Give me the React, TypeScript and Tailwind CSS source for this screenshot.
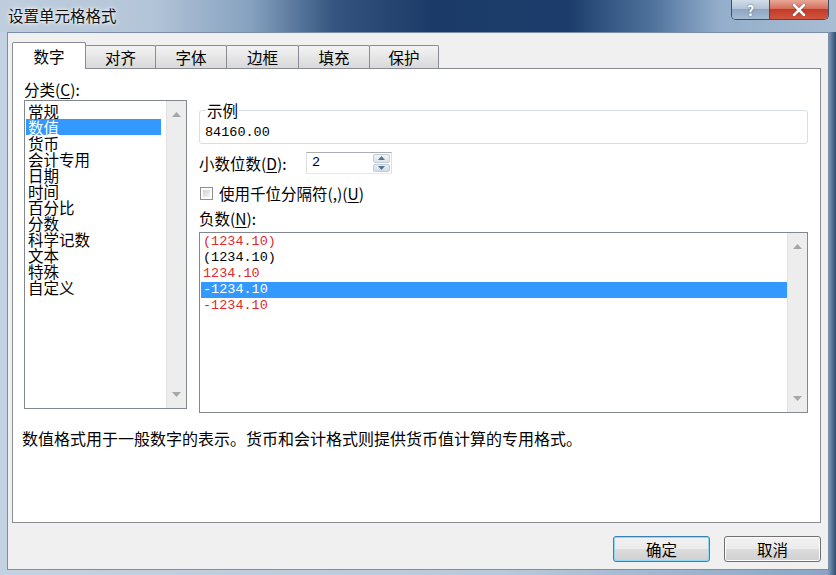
const categories = ['常规', '数值', '货币', '会计专用', '日期', '时间', '百分比', '分数', '科学记数', '文本', '特殊', '自定义'];

const negatives = [
  { text: '(1234.10)', red: true },
  { text: '(1234.10)', red: false },
  { text: '1234.10', red: true },
  { text: '-1234.10', red: false, selected: true },
  { text: '-1234.10', red: true },
];

const tabs = [
  { label: '数字', w: 'w-[74px]' },
  { label: '对齐', w: 'w-[71px]' },
  { label: '字体', w: 'w-[72px]' },
  { label: '边框', w: 'w-[73px]' },
  { label: '填充', w: 'w-[72px]' },
  { label: '保护', w: 'w-[70px]' },
];

function Arrow({ up }: { up?: boolean }) {
  return (
    <svg width="9" height="5" viewBox="0 0 9 5">
      <path d={up ? 'M0 5 L4.5 0 L9 5 Z' : 'M0 0 L4.5 5 L9 0 Z'} fill="#a6a6a6" />
    </svg>
  );
}

function ScrollBar() {
  return (
    <div className="w-[20px] h-full shrink-0 bg-[#ededed] border-l border-[#e2e2e2] flex flex-col justify-between items-center py-[11px]">
      <Arrow up />
      <Arrow />
    </div>
  );
}

function Key({ k }: { k: string }) {
  return (
    <>
      (<span className="underline underline-offset-2">{k}</span>)
    </>
  );
}

function WinButton({ children, focused }: { children: React.ReactNode; focused?: boolean }) {
  return (
    <button
      className={
        focused
          ? 'w-[97px] h-[26px] rounded-[3px] border border-[#3c7fb1] shadow-[inset_0_0_0_1px_#92d8f5] bg-[linear-gradient(#f2f2f2_0%,#ebebeb_50%,#dddddd_51%,#cfcfcf_100%)] text-[15.5px] leading-[16px]'
          : 'w-[97px] h-[26px] rounded-[3px] border border-[#707070] shadow-[inset_0_0_0_1px_#fbfbfb] bg-[linear-gradient(#f2f2f2_0%,#ebebeb_50%,#dddddd_51%,#cfcfcf_100%)] text-[15.5px] leading-[16px]'
      }
    >
      {children}
    </button>
  );
}

export default function App() {
  return (
    <div className="w-[836px] h-[575px] flex flex-col overflow-hidden bg-[linear-gradient(to_right,#c3d2e2_0%,#b7c9dc_60%,#8aa5c3_99%,#2e4a6e_100%)] font-['Noto_Sans_CJK_SC',sans-serif] text-black">

      {/* Title bar */}
      <div className="h-[32px] shrink-0 flex items-start justify-between bg-[linear-gradient(to_right,#bfcddd_0%,#b3c5d8_18%,#86a1bf_30%,#34557f_40%,#1b3a67_52%,#1c3d6b_68%,#4f729c_78%,#93aecb_86%,#a9bdd3_100%)]">
        <div className="pl-[8px] pt-[7px] text-[15.5px] leading-[16px] text-[#111] [text-shadow:0_0_6px_#ffffff,0_0_3px_#ffffff]">
          设置单元格格式
        </div>
        <div className="flex mr-[7px] h-[20px] rounded-b-[5px] border border-t-0 border-[#3b4f6b] overflow-hidden">
          <div className="w-[38px] h-full flex items-center justify-center bg-[linear-gradient(#d2dde9_0%,#b3c4d7_45%,#8ea6c2_50%,#a7bcd3_100%)] border-r border-[#3b4f6b] text-white font-bold text-[14px] leading-[14px] [text-shadow:0_0_2px_#41597a]">
            ?
          </div>
          <div className="w-[58px] h-full flex items-center justify-center bg-[linear-gradient(#e9a897_0%,#d7705c_45%,#c23b27_50%,#d1553f_100%)]">
            <svg width="14" height="12" viewBox="0 0 14 12">
              <path d="M2 1 L12 11 M12 1 L2 11" stroke="#3a2020" strokeWidth="4" strokeLinecap="round" opacity="0.35" />
              <path d="M2 1 L12 11 M12 1 L2 11" stroke="#ffffff" strokeWidth="2.6" strokeLinecap="round" />
            </svg>
          </div>
        </div>
      </div>

      {/* Client area */}
      <div className="flex-1 mx-[7px] mb-[5px] bg-[#f0f0f0] border border-[#7b8ea8] pt-[9px] pl-[4px] pr-[7px] flex flex-col">

        {/* Tabs */}
        <div className="flex items-end h-[26px] relative z-10">
          {tabs.map((t, i) =>
            i === 0 ? (
              <div
                key={t.label}
                className={`${t.w} h-[27px] -mb-px bg-white border border-b-0 border-[#898c95] rounded-t-[2px] flex items-center justify-center text-[15.5px] leading-[16px] relative z-10`}
              >
                {t.label}
              </div>
            ) : (
              <div
                key={t.label}
                className={`${t.w} h-[23px] -ml-px bg-linear-to-b from-[#f3f3f3] to-[#d9d9d9] border border-b-0 border-[#898c95] rounded-t-[2px] flex items-center justify-center text-[15.5px] leading-[16px]`}
              >
                {t.label}
              </div>
            )
          )}
        </div>

        {/* Tab panel */}
        <div className="w-[809px] h-[455px] bg-white border border-[#898c95] px-[11px] pt-[12px] text-[15.5px] leading-[16px]">
          <div className="flex">

            {/* Category */}
            <div className="w-[163px] shrink-0">
              <div className="h-[16px]">
                分类<Key k="C" />:
              </div>
              <div className="mt-[3px] h-[309px] border border-[#828790] flex">
                <div className="flex-1 pt-[2px]">
                  {categories.map((c, i) => (
                    <div
                      key={c}
                      className={
                        i === 1
                          ? 'h-[16px] ml-[1px] mr-[5px] pl-[2px] bg-[#3399ff] text-white'
                          : 'h-[16px] ml-[1px] mr-[5px] pl-[2px]'
                      }
                    >
                      {c}
                    </div>
                  ))}
                </div>
                <ScrollBar />
              </div>
            </div>

            {/* Options */}
            <div className="w-[609px] ml-[12px] pt-[21px]">
              <fieldset className="border border-[#d5dfe5] rounded-[3px] pl-[5px] pt-[7px] pb-[2px]">
                <legend className="ml-[1px] px-[1px] h-[16px]">示例</legend>
                <div className="h-[16px] font-['Liberation_Mono',monospace] text-[13.5px]">84160.00</div>
              </fieldset>

              <div className="mt-[8px] h-[22px] flex items-center">
                <div className="w-[107px]">
                  小数位数<Key k="D" />:
                </div>
                <div className="w-[86px] h-[22px] border border-[#abadb3] border-b-[#e3e9ef] border-x-[#dbdfe6] bg-white flex">
                  <div className="flex-1 pl-[5px] pt-[2px] font-['Liberation_Mono',monospace] text-[13.5px]">2</div>
                  <div className="w-[19px] flex flex-col p-px gap-px">
                    <div className="flex-1 rounded-[2px] border border-[#c2ccd7] bg-linear-to-b from-[#f2f6f9] to-[#dae2ea] flex items-center justify-center">
                      <svg width="7" height="4" viewBox="0 0 7 4"><path d="M0 4 L3.5 0 L7 4 Z" fill="#56708f" /></svg>
                    </div>
                    <div className="flex-1 rounded-[2px] border border-[#c2ccd7] bg-linear-to-b from-[#e8eef3] to-[#d3dce5] flex items-center justify-center">
                      <svg width="7" height="4" viewBox="0 0 7 4"><path d="M0 0 L3.5 4 L7 0 Z" fill="#56708f" /></svg>
                    </div>
                  </div>
                </div>
              </div>

              <div className="mt-[10px] h-[18px] flex items-center">
                <div className="w-[13px] h-[13px] ml-[1px] border border-[#8f8f8f] bg-white p-[2px]">
                  <div className="w-full h-full bg-linear-to-br from-[#cbcfd5] to-[#f6f6f6]" />
                </div>
                <div className="ml-[6px]">
                  使用千位分隔符(,)<Key k="U" />
                </div>
              </div>

              <div className="mt-[8px] h-[16px]">
                负数<Key k="N" />:
              </div>

              <div className="mt-[6px] h-[181px] border border-[#828790] flex">
                <div className="flex-1 pt-[1px] font-['Liberation_Mono',monospace] text-[13.5px]">
                  {negatives.map((n, i) => (
                    <div
                      key={i}
                      className={
                        n.selected
                          ? 'h-[16px] ml-[1px] pl-[2px] bg-[#3399ff] text-white'
                          : n.red
                            ? 'h-[16px] ml-[1px] pl-[2px] text-[#dc2b2b]'
                            : 'h-[16px] ml-[1px] pl-[2px]'
                      }
                    >
                      {n.text}
                    </div>
                  ))}
                </div>
                <ScrollBar />
              </div>
            </div>
          </div>

          {/* Description */}
          <div className="mt-[17px] -ml-[2px] text-[16px]">
            数值格式用于一般数字的表示。货币和会计格式则提供货币值计算的专用格式。
          </div>
        </div>

        {/* Buttons */}
        <div className="w-[809px] mt-[13px] flex justify-end gap-[14px]">
          <WinButton focused>确定</WinButton>
          <WinButton>取消</WinButton>
        </div>
      </div>
    </div>
  );
}
